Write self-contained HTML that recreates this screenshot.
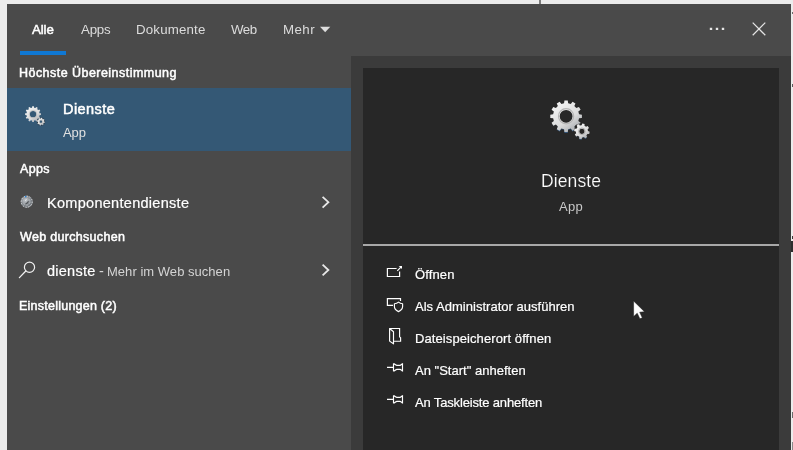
<!DOCTYPE html>
<html lang="de">
<head>
<meta charset="utf-8">
<title>Suche</title>
<style>
html,body{margin:0;padding:0;}
body{width:793px;height:450px;overflow:hidden;background:#ececec;position:relative;font-family:"Liberation Sans",sans-serif;}
.abs{position:absolute;}
.t{position:absolute;white-space:nowrap;line-height:1.15;will-change:transform;}
#win{left:7px;top:4px;width:784px;height:446px;background:#4a4a4a;}
#right{left:351px;top:56px;width:440px;height:394px;background:#3b3b3b;}
#card{left:363px;top:68px;width:416px;height:382px;background:#272727;}
#sel{left:7px;top:88px;width:344px;height:63px;background:#345875;}
#ul{left:20px;top:51px;width:46px;height:4px;background:#0f78d4;}
#div{left:363px;top:244px;width:416px;height:2px;background:#a8a8a8;}
svg{position:absolute;overflow:visible;}
</style>
</head>
<body>
<div id="win" class="abs"></div>
<div id="right" class="abs"></div>
<div id="card" class="abs"></div>
<div id="sel" class="abs"></div>
<div id="ul" class="abs"></div>
<div id="div" class="abs"></div>
<div class="abs" style="left:539px;top:0;width:2px;height:4px;background:#7c7c7c"></div>
<div class="abs" style="left:791.6px;top:12px;width:1.4px;height:2px;background:#6a6a6a"></div>
<div class="abs" style="left:791.6px;top:84px;width:1.4px;height:3px;background:#5a5a5a"></div>
<div class="abs" style="left:791.6px;top:236px;width:1.4px;height:3px;background:#3a3a3a"></div>
<div class="abs" style="left:791.4px;top:241px;width:1.6px;height:11px;background:#2e2e2e"></div>
<div class="abs" style="left:791.6px;top:412px;width:1.4px;height:6px;background:#6a6a6a"></div>
<div class="abs" style="left:791.6px;top:442px;width:1.4px;height:8px;background:#8a8a8a"></div>
<!--ICONS_START-->
<svg width="0" height="0" style="left:0;top:0">
 <defs>
  <linearGradient id="gg" x1="0.15" y1="0" x2="0.85" y2="1">
   <stop offset="0" stop-color="#f6f6f6"/><stop offset="0.6" stop-color="#dcdcdc"/><stop offset="1" stop-color="#a2a6ab"/>
  </linearGradient>
  <linearGradient id="gs" x1="0" y1="0" x2="0" y2="1">
   <stop offset="0.75" stop-color="#3a6ea5" stop-opacity="0"/><stop offset="1" stop-color="#3a6ea5" stop-opacity="0.9"/>
  </linearGradient>
  <g id="gears">
   <path d="M14.05 3.36 L14.44 0.49 L17.76 0.49 L18.15 3.36 L20.79 4.07 L22.57 1.77 L25.45 3.44 L24.34 6.12 L26.28 8.06 L28.96 6.95 L30.63 9.83 L28.33 11.61 L29.04 14.25 L31.91 14.64 L31.91 17.96 L29.04 18.35 L28.33 20.99 L30.63 22.77 L28.96 25.65 L26.28 24.54 L24.34 26.48 L25.45 29.16 L22.57 30.83 L20.79 28.53 L18.15 29.24 L17.76 32.11 L14.44 32.11 L14.05 29.24 L11.41 28.53 L9.63 30.83 L6.75 29.16 L7.86 26.48 L5.92 24.54 L3.24 25.65 L1.57 22.77 L3.87 20.99 L3.16 18.35 L0.29 17.96 L0.29 14.64 L3.16 14.25 L3.87 11.61 L1.57 9.83 L3.24 6.95 L5.92 8.06 L7.86 6.12 L6.75 3.44 L9.63 1.77 L11.41 4.07Z M9.70 16.30 a6.40 6.40 0 1 0 12.80 0 a6.40 6.40 0 1 0 -12.80 0Z" transform="translate(0 0.6)" fill="url(#gs)" fill-rule="evenodd"/>
   <path d="M14.05 3.36 L14.44 0.49 L17.76 0.49 L18.15 3.36 L20.79 4.07 L22.57 1.77 L25.45 3.44 L24.34 6.12 L26.28 8.06 L28.96 6.95 L30.63 9.83 L28.33 11.61 L29.04 14.25 L31.91 14.64 L31.91 17.96 L29.04 18.35 L28.33 20.99 L30.63 22.77 L28.96 25.65 L26.28 24.54 L24.34 26.48 L25.45 29.16 L22.57 30.83 L20.79 28.53 L18.15 29.24 L17.76 32.11 L14.44 32.11 L14.05 29.24 L11.41 28.53 L9.63 30.83 L6.75 29.16 L7.86 26.48 L5.92 24.54 L3.24 25.65 L1.57 22.77 L3.87 20.99 L3.16 18.35 L0.29 17.96 L0.29 14.64 L3.16 14.25 L3.87 11.61 L1.57 9.83 L3.24 6.95 L5.92 8.06 L7.86 6.12 L6.75 3.44 L9.63 1.77 L11.41 4.07Z M9.70 16.30 a6.40 6.40 0 1 0 12.80 0 a6.40 6.40 0 1 0 -12.80 0Z" fill="url(#gg)" fill-rule="evenodd"/>
   <circle cx="16.1" cy="16.3" r="7.6" fill="none" stroke="#b4b4b4" stroke-width="1.2"/>
   <circle cx="31.9" cy="31.4" r="7.3" fill="none" stroke="#2a2a2a" stroke-opacity="0.55" stroke-width="2.2"/>
   <path d="M31.63 25.21 L32.30 23.51 L34.57 23.97 L34.52 25.79 L36.02 26.80 L37.69 26.07 L38.97 28.00 L37.65 29.25 L37.99 31.03 L39.69 31.70 L39.23 33.97 L37.41 33.92 L36.40 35.42 L37.13 37.09 L35.20 38.37 L33.95 37.05 L32.17 37.39 L31.50 39.09 L29.23 38.63 L29.28 36.81 L27.78 35.80 L26.11 36.53 L24.83 34.60 L26.15 33.35 L25.81 31.57 L24.11 30.90 L24.57 28.63 L26.39 28.68 L27.40 27.18 L26.67 25.51 L28.60 24.23 L29.85 25.55Z M29.30 31.30 a2.60 2.60 0 1 0 5.20 0 a2.60 2.60 0 1 0 -5.20 0Z" transform="translate(0 0.6)" fill="url(#gs)" fill-rule="evenodd"/>
   <path d="M31.63 25.21 L32.30 23.51 L34.57 23.97 L34.52 25.79 L36.02 26.80 L37.69 26.07 L38.97 28.00 L37.65 29.25 L37.99 31.03 L39.69 31.70 L39.23 33.97 L37.41 33.92 L36.40 35.42 L37.13 37.09 L35.20 38.37 L33.95 37.05 L32.17 37.39 L31.50 39.09 L29.23 38.63 L29.28 36.81 L27.78 35.80 L26.11 36.53 L24.83 34.60 L26.15 33.35 L25.81 31.57 L24.11 30.90 L24.57 28.63 L26.39 28.68 L27.40 27.18 L26.67 25.51 L28.60 24.23 L29.85 25.55Z M29.30 31.30 a2.60 2.60 0 1 0 5.20 0 a2.60 2.60 0 1 0 -5.20 0Z" fill="url(#gg)" fill-rule="evenodd"/>
   <circle cx="31.9" cy="31.3" r="3.3" fill="none" stroke="#a8a8a8" stroke-width="0.9"/>
  </g>
 </defs>
</svg>
<svg id="ibig" style="left:550.3px;top:99.8px" width="40" height="40" viewBox="0 0 40 40"><use href="#gears"/></svg>
<svg id="ismall" style="left:24.8px;top:106px" width="20" height="20" viewBox="0 0 40 40"><use href="#gears"/></svg>
<svg id="itri" style="left:319px;top:25px" width="13" height="9" viewBox="319 25 13 9"><path d="M320 26.7 L330.3 26.7 L325.15 32.3Z" fill="#dedede"/></svg>
<svg id="idots" style="left:708px;top:26px" width="18" height="6" viewBox="708 26 18 6"><path d="M709.8 27.8h2.4v2.3h-2.4z M715.8 27.8h2.4v2.3h-2.4z M721.8 27.8h2.4v2.3h-2.4z" fill="#e6e6e6"/></svg>
<svg id="iclose" style="left:750px;top:20px" width="18" height="18" viewBox="750 20 18 18"><path d="M752.7 22.6 L765.3 35.3 M765.3 22.6 L752.7 35.3" stroke="#e4e4e4" stroke-width="1.25" fill="none"/></svg>
<svg id="ichev1" style="left:320px;top:194px" width="12" height="16" viewBox="320 194 12 16"><path d="M322.6 196.8 L328.4 202.2 L322.6 207.6" stroke="#e8e8e8" stroke-width="1.8" fill="none"/></svg>
<svg id="ichev2" style="left:320px;top:262px" width="12" height="16" viewBox="320 262 12 16"><path d="M322.6 264.6 L328.4 270 L322.6 275.4" stroke="#e8e8e8" stroke-width="1.8" fill="none"/></svg>
<svg id="isearch" style="left:17px;top:260px" width="20" height="20" viewBox="17 260 20 20"><circle cx="29.5" cy="267.3" r="5.1" stroke="#f0f0f0" stroke-width="1.2" fill="none"/><path d="M25.8 271 L19.4 277.6" stroke="#f0f0f0" stroke-width="1.3" fill="none" stroke-linecap="round"/></svg>
<svg id="icomp" style="left:19px;top:194px" width="16" height="16" viewBox="19 194 16 16">
 <defs><radialGradient id="cg" cx="0.42" cy="0.4" r="0.62"><stop offset="0" stop-color="#c4c8cc"/><stop offset="0.55" stop-color="#8d9297"/><stop offset="0.8" stop-color="#70757a"/><stop offset="1" stop-color="#9da2a7"/></radialGradient></defs>
 <circle cx="26.7" cy="201.7" r="6.1" fill="url(#cg)"/>
 <circle cx="26.7" cy="201.7" r="5.5" fill="none" stroke="#e6e8ea" stroke-width="1" stroke-dasharray="1.3 1.5" stroke-opacity="0.85"/>
 <circle cx="26.7" cy="201.7" r="3.4" fill="none" stroke="#b9bdc1" stroke-width="0.8" stroke-dasharray="2.2 1.4"/>
 <path d="M25.6 203.9 C26.6 203.6 27.9 202.6 28.5 201.2" stroke="#4e5256" stroke-width="1.1" fill="none"/>
 <path d="M25.2 200.4 L26.6 199.6" stroke="#eef0f2" stroke-width="1" fill="none"/>
 <rect x="24.9" y="195.9" width="1.4" height="1.4" fill="#1e7fd8"/>
</svg>
<svg id="iopen" style="left:385px;top:264px" width="20" height="16" viewBox="385 264 20 16"><path d="M396.6 268.5 H387.4 V276.5 H399.6 V271.4" stroke="#fff" stroke-width="1.2" fill="none"/><path d="M397.3 270.8 L401.4 266.6" stroke="#fff" stroke-width="1.2" fill="none"/><path d="M398.7 266 H402 V269.1 Z" fill="#fff"/></svg>
<svg id="iadmin" style="left:385px;top:296px" width="20" height="18" viewBox="385 296 20 18"><path d="M393 305.3 H387.4 V298.7 H400.5 V300.9" stroke="#fff" stroke-width="1.2" fill="none"/><path d="M398.5 302.2 C397.3 303.3 395.8 303.7 394.4 303.7 V306.6 C394.4 309 396.2 310.6 398.5 311.6 C400.8 310.6 402.6 309 402.6 306.6 V303.7 C401.2 303.7 399.7 303.3 398.5 302.2 Z" stroke="#fff" stroke-width="1.15" fill="none" stroke-linejoin="round"/></svg>
<svg id="ifile" style="left:387px;top:326px" width="16" height="20" viewBox="387 326 16 20"><path d="M389.6 328.5 H399.6 V336.8 L400.6 337.8 V341.2 H394" stroke="#fff" stroke-width="1.15" fill="none"/><path d="M389.6 328.5 V341.1 L393.5 343.8 V331.7 Z" stroke="#fff" stroke-width="1.15" fill="none" stroke-linejoin="round"/></svg>
<svg id="ipin1" style="left:385px;top:361px" width="20" height="13" viewBox="385 361 20 13"><path id="pinp" d="M387 367.3 H393.4 M393.5 363.4 V371.3 M393.5 363.6 C394.8 363.6 395.6 365.4 397 365.4 H400 C401 365.4 401.6 364 402.5 363.7 V371 C401.6 370.7 401 369.3 400 369.3 H397 C395.6 369.3 394.8 371.1 393.5 371.1" stroke="#fff" stroke-width="1.15" fill="none"/></svg>
<svg id="ipin2" style="left:385px;top:393px" width="20" height="13" viewBox="385 361 20 13"><use href="#pinp"/></svg>
<svg id="icursor" style="left:632px;top:300px" width="14" height="20" viewBox="632 300 14 20"><path d="M633.6 301 V316.6 L637.2 313.2 L639.9 318.8 L642.3 317.7 L639.7 312.2 L644.5 311.7 Z" fill="#fff" stroke="#1a1a1a" stroke-width="0.5" stroke-linejoin="round"/></svg>
<!--ICONS_END-->
<div id="t1" class="t" style="left:32.00px;top:21.74px;font-size:13.3px;font-weight:normal;-webkit-text-stroke:0.5px;color:#ffffff;letter-spacing:-0.133px">Alle</div>
<div id="t2" class="t" style="left:80.70px;top:21.74px;font-size:13.3px;color:#dcdcdc;letter-spacing:-0.233px">Apps</div>
<div id="t3" class="t" style="left:135.60px;top:21.74px;font-size:13.3px;color:#dcdcdc;letter-spacing:0.165px">Dokumente</div>
<div id="t4" class="t" style="left:230.80px;top:21.74px;font-size:13.3px;color:#dcdcdc;letter-spacing:-0.500px">Web</div>
<div id="t5" class="t" style="left:283.20px;top:21.74px;font-size:13.3px;color:#dcdcdc;letter-spacing:0.433px">Mehr</div>
<div id="t6" class="t" style="left:18.80px;top:65.68px;font-size:12.5px;font-weight:normal;-webkit-text-stroke:0.5px;color:#ffffff;letter-spacing:0.461px">Höchste Übereinstimmung</div>
<div id="t7" class="t" style="left:62.60px;top:101.44px;font-size:14.5px;font-weight:normal;-webkit-text-stroke:0.5px;color:#ffffff;letter-spacing:0.433px">Dienste</div>
<div id="t8" class="t" style="left:63.00px;top:126.02px;font-size:13px;color:#e0e0e0;letter-spacing:-0.053px">App</div>
<div id="t9" class="t" style="left:19.80px;top:162.18px;font-size:12.5px;font-weight:normal;-webkit-text-stroke:0.5px;color:#ffffff;letter-spacing:0.333px">Apps</div>
<div id="t10" class="t" style="-webkit-text-stroke:0.2px;left:47.30px;top:195.44px;font-size:14.5px;color:#ffffff;letter-spacing:0.290px">Komponentendienste</div>
<div id="t11" class="t" style="left:19.60px;top:229.98px;font-size:12.5px;font-weight:normal;-webkit-text-stroke:0.5px;color:#ffffff;letter-spacing:0.314px">Web durchsuchen</div>
<div id="t12" class="t" style="-webkit-text-stroke:0.2px;left:47.45px;top:263.04px;font-size:14.5px;color:#ffffff;letter-spacing:0.250px">dienste</div>
<div id="t13a" class="t" style="left:99.10px;top:263.04px;font-size:14.5px;color:#d4d4d4;letter-spacing:0.000px">-</div>
<div id="t13" class="t" style="left:107.10px;top:265.42px;font-size:13px;color:#d4d4d4;letter-spacing:0.031px">Mehr im Web suchen</div>
<div id="t14" class="t" style="left:19.02px;top:299.38px;font-size:12.5px;font-weight:normal;-webkit-text-stroke:0.5px;color:#ffffff;letter-spacing:0.238px">Einstellungen (2)</div>
<div id="t15" class="t" style="-webkit-text-stroke:0.2px #272727;left:541.20px;top:170.57px;font-size:17.5px;color:#ffffff;letter-spacing:0.113px">Dienste</div>
<div id="t16" class="t" style="left:559.20px;top:200.12px;font-size:13px;color:#c8c8c8;letter-spacing:0.348px">App</div>
<div id="t17" class="t" style="-webkit-text-stroke:0.2px;left:415.20px;top:268.02px;font-size:13px;color:#ffffff;letter-spacing:0.133px">Öffnen</div>
<div id="t18" class="t" style="-webkit-text-stroke:0.2px;left:414.80px;top:300.02px;font-size:13px;color:#ffffff;letter-spacing:0.019px">Als Administrator ausführen</div>
<div id="t19" class="t" style="-webkit-text-stroke:0.2px;left:414.70px;top:332.02px;font-size:13px;color:#ffffff;letter-spacing:0.091px">Dateispeicherort öffnen</div>
<div id="t20" class="t" style="-webkit-text-stroke:0.2px;left:414.80px;top:364.02px;font-size:13px;color:#ffffff;letter-spacing:0.011px">An &quot;Start&quot; anheften</div>
<div id="t21" class="t" style="-webkit-text-stroke:0.2px;left:414.80px;top:396.02px;font-size:13px;color:#ffffff;letter-spacing:-0.157px">An Taskleiste anheften</div>
</body>
</html>
